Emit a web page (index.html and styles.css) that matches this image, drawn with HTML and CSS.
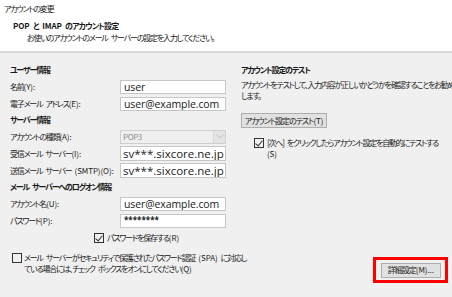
FILE: index.html
```
<!DOCTYPE html>
<html lang="ja">
<head>
  <meta charset="UTF-8" />
  <title>アカウントの変更</title>
  <link rel="stylesheet" href="styles.css">
</head>
<body>
  <header class="top">
    <div class="win-title">アカウントの変更</div>
    <div class="page-title"><span class="en">POP</span> と <span class="en">IMAP</span> のアカウント設定</div>
    <div class="page-sub">お使いのアカウントのメール サーバーの設定を入力してください。</div>
  </header>

  <main class="panel">
    <section class="left">
      <div class="group">ユーザー情報</div>
      <div class="row"><span class="label">名前<span class="en">(Y):</span></span><span class="field">user</span></div>
      <div class="row"><span class="label">電子メール アドレス<span class="en">(E):</span></span><span class="field">user@example.com</span></div>

      <div class="group">サーバー情報</div>
      <div class="row">
        <span class="label">アカウントの種類<span class="en">(A):</span></span>
        <span class="field select"><span>POP3</span><span class="arrow"><svg width="8" height="5" viewBox="0 0 8 5"><path d="M0.5 0.5 L4 4 L7.5 0.5" fill="none" stroke="#c4c4c4" stroke-width="1"/></svg></span></span>
      </div>
      <div class="row"><span class="label">受信メール サーバー<span class="en">(I):</span></span><span class="field big">sv***.sixcore.ne.jp</span></div>
      <div class="row"><span class="label">送信メール サーバー <span class="en">(SMTP)(O):</span></span><span class="field big">sv***.sixcore.ne.jp</span></div>

      <div class="group">メール サーバーへのログオン情報</div>
      <div class="row"><span class="label">アカウント名<span class="en">(U):</span></span><span class="field">user@example.com</span></div>
      <div class="row"><span class="label">パスワード<span class="en">(P):</span></span><span class="field pass">********</span></div>
      <div class="save-row"><span class="check on"></span><span>パスワードを保存する<span class="en">(R)</span></span></div>

      <div class="spa">
        <span class="check"></span>
        <span class="spa-text">メール サーバーがセキュリティで保護されたパスワード認証 <span class="en">(SPA)</span> に対応し<br>ている場合には、チェック ボックスをオンにしてください<span class="en">(Q)</span></span>
      </div>
    </section>

    <section class="right">
      <div class="group">アカウント設定のテスト</div>
      <p class="desc">アカウントをテストして、入力内容が正しいかどうかを確認することをお勧め<br>します。</p>
      <button class="btn test-btn">アカウント設定のテスト<span class="en">(T)</span></button>
      <div class="auto-row">
        <span class="check on"></span>
        <span class="auto-text">[次へ] をクリックしたらアカウント設定を自動的にテストする<br><span class="en">(S)</span></span>
      </div>
      <div class="highlight">
        <button class="btn">詳細設定<span class="en">(M)...</span></button>
      </div>
    </section>
  </main>
</body>
</html>
```

FILE: styles.css
```
* { margin: 0; padding: 0; box-sizing: border-box; }

html, body {
  width: 452px;
  height: 297px;
  overflow: hidden;
}

body {
  background: #f0f0f0;
  color: #1a1a1a;
  font-family: "Noto Sans CJK JP", "Noto Sans", sans-serif;
  font-size: 8px;
  font-feature-settings: "palt";
  letter-spacing: -1.2px;
  word-spacing: 2.5px;
  white-space: nowrap;
}

.en {
  letter-spacing: -0.1px;
}

.top {
  background: #fff;
  height: 53px;
  border-bottom: 2px solid #d9d9d9;
  padding: 2px 0 0 4px;
}

.win-title {
  line-height: 13px;
}

.page-title {
  margin: 5px 0 0 9px;
  font-weight: bold;
  line-height: 12px;
  letter-spacing: -0.9px;
}

.page-sub {
  margin-left: 23px;
  line-height: 11px;
}

.panel {
  display: grid;
  grid-template-columns: 226px 1fr;
  height: 244px;
  padding-top: 9px;
}

.left {
  padding-left: 10px;
}

.group {
  font-weight: bold;
  height: 16px;
  line-height: 16px;
}

.row {
  display: flex;
  align-items: center;
  justify-content: space-between;
  height: 17px;
}

.field {
  width: 106px;
  height: 14px;
  background: #fff;
  border: 1px solid #c6c6c6;
  font-family: "Open Sans", "Noto Sans", sans-serif;
  font-size: 10.5px;
  letter-spacing: -0.1px;
  word-spacing: 0;
  line-height: 12px;
  padding-left: 3px;
  color: #222;
  overflow: hidden;
}

.field.big {
  height: 15px;
  font-size: 11.5px;
  line-height: 13px;
  letter-spacing: 0;
  padding-left: 2px;
}

.field.pass {
  font-size: 8px;
  font-weight: bold;
  line-height: 9px;
  letter-spacing: 0;
}

.field.select {
  display: flex;
  justify-content: space-between;
  background: #efefef;
  border-color: #cfcfcf;
  color: #8d8d8d;
  font-family: "Noto Sans CJK JP", sans-serif;
  font-size: 8px;
  letter-spacing: -0.4px;
  line-height: 12px;
  padding-left: 2px;
}

.arrow {
  width: 12px;
  border-left: 1px solid #d9d9d9;
  background: #e4e4e4;
  display: flex;
  align-items: center;
  justify-content: center;
}

.check {
  display: inline-block;
  width: 10px;
  height: 10px;
  border: 1px solid #333;
  background: transparent;
  flex: none;
  position: relative;
}

.check.on::after {
  content: "";
  position: absolute;
  left: 2px;
  top: 0px;
  width: 3px;
  height: 6px;
  border-right: 1px solid #333;
  border-bottom: 1px solid #333;
  transform: rotate(40deg);
}

.save-row {
  display: flex;
  align-items: center;
  gap: 3px;
  height: 17px;
  padding-left: 84px;
}

.spa {
  display: flex;
  align-items: flex-start;
  gap: 2px;
  margin-top: 6px;
  padding-left: 2px;
}

.spa .check {
  margin-top: 1px;
}

.spa-text {
  line-height: 11px;
}

.right {
  display: flex;
  flex-direction: column;
  align-items: flex-start;
  padding-left: 15px;
}

.desc {
  margin-top: 1px;
  line-height: 11px;
}

.btn {
  font-family: "Noto Sans CJK JP", sans-serif;
  font-size: 8px;
  font-feature-settings: "palt";
  letter-spacing: -1px;
  color: #1a1a1a;
  background: #e1e1e1;
  border: 1px solid #adadad;
  height: 15px;
  line-height: 12px;
}

.test-btn {
  margin-top: 12px;
  width: 86px;
}

.auto-row {
  display: flex;
  align-items: flex-start;
  gap: 3px;
  margin-top: 9px;
  padding-left: 13px;
}

.auto-row .check {
  margin-top: 1px;
}

.auto-text {
  line-height: 11px;
}

.highlight {
  align-self: flex-end;
  margin-top: auto;
  margin-bottom: 14px;
  margin-right: 6px;
  width: 75px;
  height: 26px;
  border: 3px solid #f00;
  display: flex;
  align-items: center;
  justify-content: center;
}

.highlight .btn {
  width: 60px;
}
```
